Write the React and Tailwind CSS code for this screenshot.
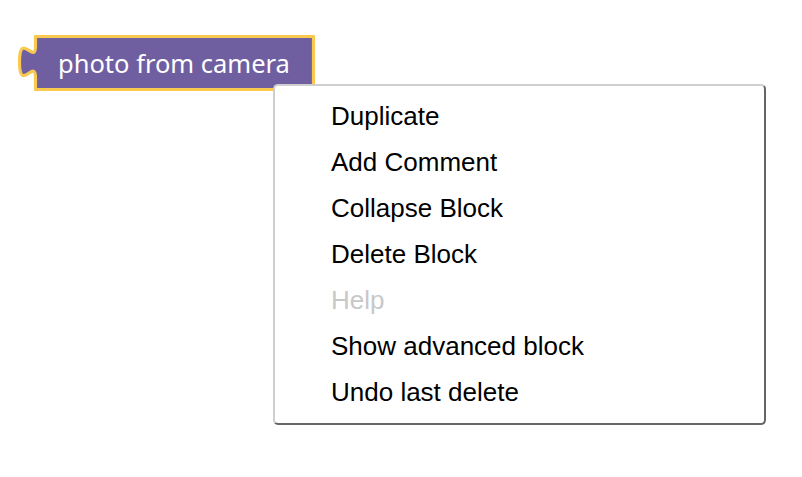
const menuItems = [
  { label: "Duplicate" },
  { label: "Add Comment" },
  { label: "Collapse Block" },
  { label: "Delete Block" },
  { label: "Help", disabled: true },
  { label: "Show advanced block" },
  { label: "Undo last delete" },
];

// block with the classic puzzle output tab on its left edge
function CameraBlock() {
  return (
    <div className="absolute left-[18px] top-[35px] w-[297px] h-[56px] flex items-center pl-[40px]">
      <svg className="absolute inset-0" width="297" height="56" viewBox="0 0 297 56">
        <path
          d="M17.5,1.5 V11 c0,20 -16,-16 -16,16 s16,-5 16,16 V54.5 H295.5 V1.5 Z"
          fill="#6f5fa1"
          stroke="#f8c94e"
          strokeWidth="3.2"
          strokeLinejoin="round"
        />
      </svg>
      <span className="relative text-white text-[25.5px] leading-[56px] font-['Noto_Sans',sans-serif]">
        photo from camera
      </span>
    </div>
  );
}

export default function App() {
  return (
    <div className="relative w-[802px] h-[477px] bg-white overflow-hidden">
      <CameraBlock />

      {/* context menu sits over the workspace */}
      <div className="absolute left-[273px] top-[84px] w-[493px] bg-white border-2 border-t-[#cfcfcf] border-l-[#cfcfcf] border-r-[#666666] border-b-[#666666] rounded-[5px] pt-[7px] pb-[8px] font-['Liberation_Sans',Arial,sans-serif]">
        {menuItems.map((item) => (
          <div
            key={item.label}
            className={`pl-[56px] h-[46px] leading-[46px] text-[26px] ${
              item.disabled ? "text-[#c8c8c8]" : "text-black"
            }`}
          >
            {item.label}
          </div>
        ))}
      </div>
    </div>
  );
}
